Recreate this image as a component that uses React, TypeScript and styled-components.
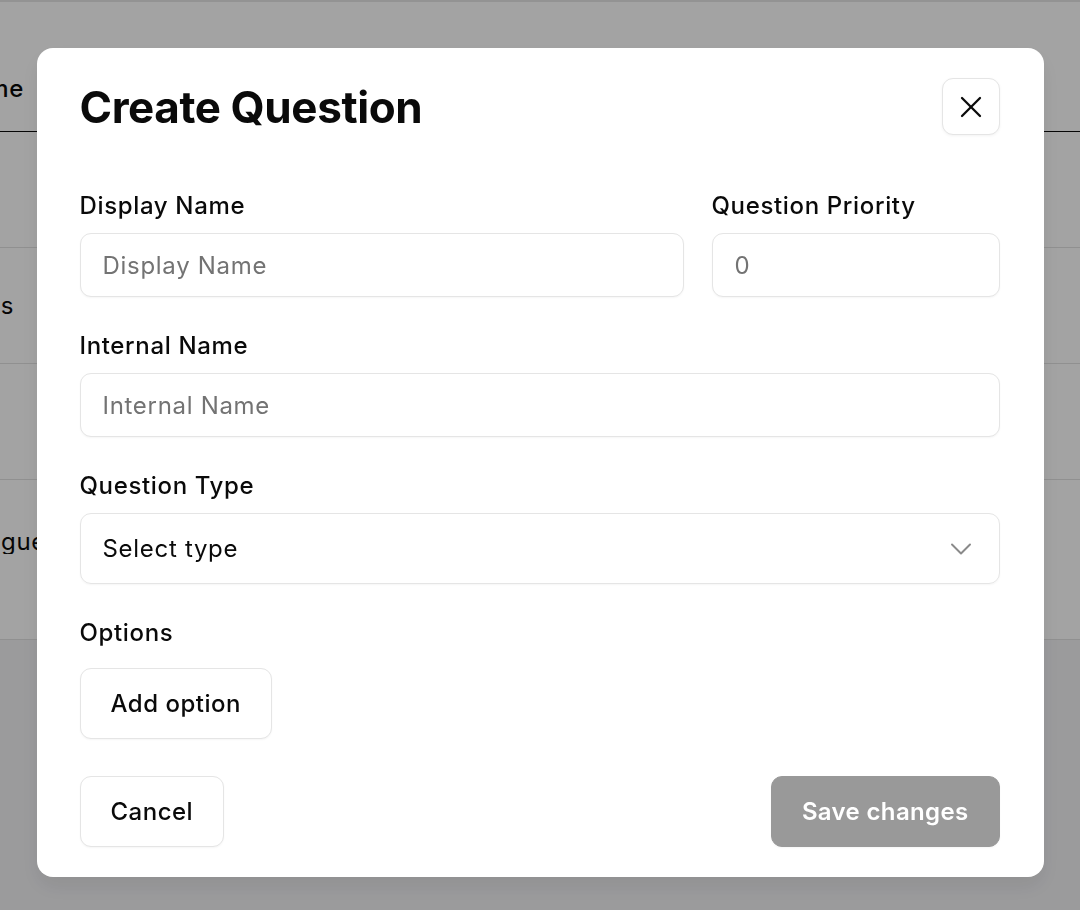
import React from 'react';
import styled, { createGlobalStyle } from 'styled-components';
import { X, ChevronDown } from 'lucide-react';

const GlobalStyle = createGlobalStyle`
    * { box-sizing: border-box; }
    html, body {
        margin: 0;
        padding: 0;
        background: #f3f3f5;
        font-family: Inter, "Noto Sans", "Liberation Sans", sans-serif;
        color: #0a0a0a;
    }
`;

const Page = styled.div`
    min-height: 910px;
    background: #f3f3f5;
`;
const Table = styled.div`
    background: #ffffff;
    border-top: 2px solid #e6e6e6;
`;
const Row = styled.div<{ height: number; head?: boolean; lift?: number }>`
    display: flex;
    align-items: ${props => (props.head ? 'flex-end' : 'center')};
    height: ${props => props.height}px;
    padding-bottom: ${props => props.lift ?? 0}px;
    border-bottom: 1px solid ${props => (props.head ? '#0a0a0a' : '#e2e2e2')};
`;
const Cell = styled.div<{ end: number; head?: boolean }>`
    width: ${props => props.end}px;
    display: flex;
    justify-content: flex-end;
    overflow: hidden;
    white-space: nowrap;
    font-size: 24px;
    line-height: 24px;
    letter-spacing: 0.7px;
    font-weight: ${props => (props.head ? 500 : 400)};
`;

const Overlay = styled.div`
    position: fixed;
    inset: 0;
    background: rgba(0, 0, 0, 0.36);
    display: flex;
    justify-content: center;
    align-items: flex-start;
    padding-top: 48px;
`;
const Dialog = styled.div`
    width: 1007px;
    background: #ffffff;
    border-radius: 16px;
    padding: 30px 44px 30px 43px;
    box-shadow: 0 10px 20px rgba(0, 0, 0, 0.08);
    display: flex;
    flex-direction: column;
`;
const Header = styled.div`
    display: flex;
    align-items: center;
    justify-content: space-between;
`;
const Title = styled.h2`
    margin: 0;
    font-size: 44px;
    font-weight: 700;
    letter-spacing: -0.4px;
`;
const CloseButton = styled.button`
    width: 58px;
    height: 57px;
    display: flex;
    align-items: center;
    justify-content: center;
    border: 1px solid #e5e5e5;
    border-radius: 11px;
    background: #ffffff;
    box-shadow: 0 1px 3px rgba(0, 0, 0, 0.05);
    color: #0a0a0a;
    padding: 0;
`;
const Body = styled.div`
    margin-top: 58px;
    display: flex;
    flex-direction: column;
    gap: 36px;
`;
const TopGrid = styled.div`
    display: grid;
    grid-template-columns: 1fr 288px;
    gap: 28px;
`;
const Field = styled.div`
    display: flex;
    flex-direction: column;
    gap: 15px;
`;
const Label = styled.label`
    padding-top: 1px;
    font-size: 24px;
    font-weight: 500;
    line-height: 24px;
    letter-spacing: 0.65px;
`;
const Input = styled.input`
    height: 64px;
    width: 100%;
    border: 1px solid #e5e5e5;
    border-radius: 11px;
    padding: 0 22px;
    font-family: inherit;
    font-size: 24px;
    letter-spacing: 0.7px;
    color: #0a0a0a;
    box-shadow: 0 1px 2px rgba(0, 0, 0, 0.04);
    outline: none;
    &::placeholder { color: #737373; }
`;
const Select = styled.div`
    height: 71px;
    display: flex;
    align-items: center;
    justify-content: space-between;
    border: 1px solid #e5e5e5;
    border-radius: 11px;
    padding: 0 20px 0 22px;
    font-size: 24px;
    letter-spacing: 0.7px;
    box-shadow: 0 1px 2px rgba(0, 0, 0, 0.04);
    color: #0a0a0a;
`;
const OptionsField = styled(Field)`
    gap: 23px;
    align-items: flex-start;
`;
const Button = styled.button<{ primary?: boolean }>`
    height: 71px;
    padding: 0 30px;
    border-radius: 11px;
    font-family: inherit;
    font-size: 24px;
    letter-spacing: ${props => (props.primary ? '0.35px' : '0.5px')};
    font-weight: ${props => (props.primary ? 600 : 500)};
    border: 1px solid ${props => (props.primary ? '#999999' : '#e5e5e5')};
    background: ${props => (props.primary ? '#999999' : '#ffffff')};
    color: ${props => (props.primary ? '#ffffff' : '#0a0a0a')};
    box-shadow: 0 1px 2px rgba(0, 0, 0, 0.04);
`;
const Footer = styled.div`
    margin-top: 37px;
    display: flex;
    justify-content: space-between;
`;

const rows = [
    { text: '', height: 116, end: 20, lift: 0 },
    { text: 'Teams', height: 116, end: 14, lift: 0 },
    { text: '', height: 116, end: 20, lift: 0 },
    { text: 'League', height: 160, end: 46, lift: 36 },
];

export default function App() {
    return (
        <>
            <GlobalStyle />
            <Page>
                <Table>
                    <Row height={130} head lift={30}>
                        <Cell end={24} head>Name</Cell>
                    </Row>
                    {rows.map((row, i) => (
                        <Row key={i} height={row.height} lift={row.lift}>
                            <Cell end={row.end}>{row.text}</Cell>
                        </Row>
                    ))}
                </Table>
            </Page>
            <Overlay>
                <Dialog>
                    <Header>
                        <Title>Create Question</Title>
                        <CloseButton aria-label="Close">
                            <X size={36} strokeWidth={1.5} />
                        </CloseButton>
                    </Header>
                    <Body>
                        <TopGrid>
                            <Field>
                                <Label>Display Name</Label>
                                <Input placeholder="Display Name" />
                            </Field>
                            <Field>
                                <Label>Question Priority</Label>
                                <Input placeholder="0" />
                            </Field>
                        </TopGrid>
                        <Field>
                            <Label>Internal Name</Label>
                            <Input placeholder="Internal Name" />
                        </Field>
                        <Field>
                            <Label>Question Type</Label>
                            <Select>
                                <span>Select type</span>
                                <ChevronDown size={36} strokeWidth={1.3} color="#8a8a8a" />
                            </Select>
                        </Field>
                        <OptionsField>
                            <Label>Options</Label>
                            <Button>Add option</Button>
                        </OptionsField>
                    </Body>
                    <Footer>
                        <Button>Cancel</Button>
                        <Button primary>Save changes</Button>
                    </Footer>
                </Dialog>
            </Overlay>
        </>
    );
}
